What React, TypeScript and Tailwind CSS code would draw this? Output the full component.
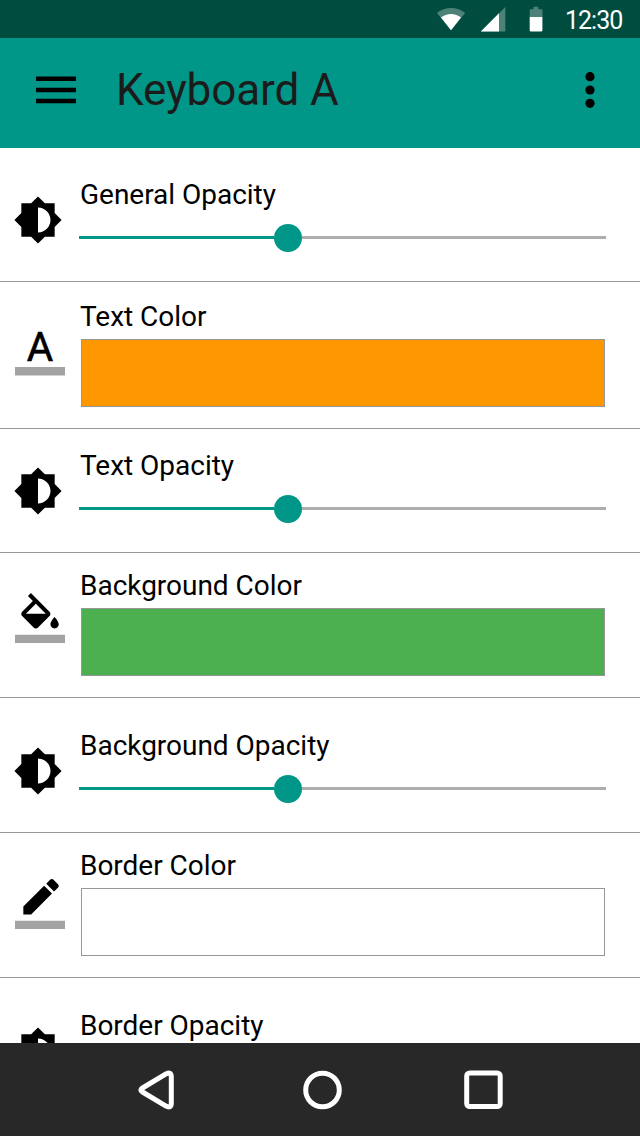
import React from "react";

type IconName = "opacity" | "text" | "fill" | "pencil";

function OpacityIcon() {
  return (
    <svg viewBox="0 0 24 24" className="block size-[50px]" fill="#000">
      <path d="M20 15.31L23.31 12 20 8.69V4h-4.69L12 .69 8.69 4H4v4.69L.69 12 4 15.31V20h4.69L12 23.31 15.31 20H20v-4.69zM12 18V6c3.31 0 6 2.69 6 6s-2.69 6-6 6z" />
    </svg>
  );
}

function FillIcon() {
  return (
    <svg viewBox="0 0 24 24" className="block size-[50px]" fill="#000">
      <path d="M16.56 8.94L7.62 0 6.21 1.41l2.38 2.38-5.15 5.15c-.59.59-.59 1.54 0 2.12l5.5 5.5c.29.29.68.44 1.06.44s.77-.15 1.06-.44l5.5-5.5c.59-.58.59-1.53 0-2.12zM5.21 10L10 5.21 14.79 10H5.21zM19 11.5s-2 2.17-2 3.5c0 1.1.9 2 2 2s2-.9 2-2c0-1.33-2-3.5-2-3.5z" />
      <path fillOpacity=".36" d="M0 20h24v4H0z" />
    </svg>
  );
}

function PencilIcon() {
  return (
    <svg viewBox="0 0 24 24" className="block size-[50px]" fill="#000">
      <path d="M17.75 7L14 3.25l-10 10V17h3.75l10-10zm2.96-2.96c.39-.39.39-1.02 0-1.41L18.37.29c-.39-.39-1.02-.39-1.41 0L15 2.25 18.75 6l1.96-1.96z" />
      <path fillOpacity=".36" d="M0 20h24v4H0z" />
    </svg>
  );
}

function TextIcon() {
  return (
    <svg viewBox="0 0 50 50" className="block size-[50px] overflow-visible" fill="#000">
      <text x="25" y="35.600" textAnchor="middle" stroke="#000" strokeWidth=".6" className="font-['Roboto',sans-serif] text-[40.5px]">
        A
      </text>
      <path fillOpacity=".36" d="M0 41.900h50V50.500H0z" />
    </svg>
  );
}

const icons: Record<IconName, React.ReactNode> = {
  opacity: <OpacityIcon />,
  text: <TextIcon />,
  fill: <FillIcon />,
  pencil: <PencilIcon />,
};

interface RowProps {
  icon: IconName;
  label: string;
  rowClass: string;
  iconClass: string;
  swatch?: string;
}

function Slider() {
  return (
    <div className="-ml-[2px] mt-[14px] flex h-7 w-[527px] items-start">
      <div className="mt-3 h-[3px] w-[195px] bg-[#009688]" />
      <div className="size-7 rounded-full bg-[#009688]" />
      <div className="mt-3 h-[3px] flex-1 bg-[#adadad]" />
    </div>
  );
}

function Row({ icon, label, rowClass, iconClass, swatch }: RowProps) {
  return (
    <div className={`flex shrink-0 border-b border-[#979797] ${rowClass}`}>
      <div className={`w-[81px] shrink-0 ${iconClass}`}>{icons[icon]}</div>
      <div>
        <div className="-ml-px h-8 whitespace-nowrap text-[28px] leading-[34px] tracking-[-0.02px]">{label}</div>
        {swatch ? (
          <div className={`mt-[7px] h-[68px] w-[524px] border border-[#979797] ${swatch}`} />
        ) : (
          <Slider />
        )}
      </div>
    </div>
  );
}

const rows: RowProps[] = [
  { icon: "opacity", label: "General Opacity", rowClass: "h-[134px] pt-[30px]", iconClass: "pl-[13px] pt-[17px]" },
  { icon: "text", label: "Text Color", rowClass: "h-[147px] pt-[18px]", iconClass: "pl-[15px] pt-[25px]", swatch: "bg-[#ff9800]" },
  { icon: "opacity", label: "Text Opacity", rowClass: "h-[124px] pt-[20px]", iconClass: "pl-[13px] pt-[17px]" },
  { icon: "fill", label: "Background Color", rowClass: "h-[145px] pt-[16px]", iconClass: "pl-[15px] pt-[24px]", swatch: "bg-[#4caf50]" },
  { icon: "opacity", label: "Background Opacity", rowClass: "h-[135px] pt-[31px]", iconClass: "pl-[13px] pt-[17px]" },
  { icon: "pencil", label: "Border Color", rowClass: "h-[145px] pt-[16px]", iconClass: "pl-[15px] pt-[30px]", swatch: "bg-white" },
  { icon: "opacity", label: "Border Opacity", rowClass: "h-[135px] pt-[31px]", iconClass: "pl-[13px] pt-[17px]" },
];

function StatusBar() {
  return (
    <div className="flex h-[38px] shrink-0 items-center bg-[#004d40] pl-[436px] text-white">
      <svg viewBox="0 0 30 38" className="h-[38px] w-[30px]" fill="#fff">
        <path fillOpacity=".3" d="M1 13C5 9.700 10 8 15 8s10 1.700 14.200 5L15 30.300z" />
        <path d="M5 17.500C8 15.200 11.300 14 15 14s7.200 1.200 10 3.500L15 30.300z" />
      </svg>
      <svg viewBox="0 0 26 38" className="ml-[14px] h-[38px] w-[26px]" fill="#fff">
        <path fillOpacity=".3" d="M25.300 7v24.600H.8z" />
        <path d="M19 13.300v18.300H.8z" />
      </svg>
      <svg viewBox="0 0 14 38" className="ml-[23px] h-[38px] w-[14px]" fill="#fff">
        <path fillOpacity=".3" d="M1.500 9.200h3V6.800h4.800v2.400h3q1.200 0 1.200 1.200V17H.7v-6.600q0-1.200.8-1.200z" />
        <path d="M.7 17h12.700v13.300q0 1.300-1.300 1.300H2q-1.300 0-1.300-1.300z" />
      </svg>
      <span className="ml-[22px] mt-[3px] text-[25px] leading-7 tracking-[-1px]">12:30</span>
    </div>
  );
}

export default function App() {
  return (
    <div className="flex h-[1136px] w-[640px] flex-col overflow-hidden bg-white font-['Roboto',sans-serif] text-black">
      <StatusBar />
      <header className="flex h-[110px] shrink-0 items-center bg-[#009688] pb-[6px]">
        <svg viewBox="0 0 40 28" className="ml-9 h-7 w-10">
          <path d="M0 .6h40v4.500H0zM0 11.700h40v4.500H0zM0 22.800h40v4.500H0z" />
        </svg>
        <h1 className="ml-10 flex-1 whitespace-nowrap text-[44px] leading-[52px] tracking-[-0.1px] text-[#1b1b1b]">Keyboard A</h1>
        <svg viewBox="0 0 10 38" className="mr-[45px] h-[38px] w-[10px]">
          <circle cx="5" cy="5.700" r="4.600" />
          <circle cx="5" cy="19" r="4.600" />
          <circle cx="5" cy="32.300" r="4.600" />
        </svg>
      </header>
      <main className="flex min-h-0 flex-1 flex-col overflow-hidden">
        {rows.map((row) => (
          <Row key={row.label} {...row} />
        ))}
      </main>
      <nav className="flex h-[93px] shrink-0 items-center bg-[#282828]">
        <svg viewBox="0 0 40 44" className="ml-[136px] h-11 w-10" fill="none" stroke="#fff" strokeWidth="5">
          <path strokeLinejoin="round" d="M30 5.900Q35 3.500 35.300 8.500V35.500Q35 40.500 30 38.100L6.500 24Q3.200 22 6.500 20z" />
        </svg>
        <svg viewBox="0 0 40 40" className="ml-[126px] size-10" fill="none" stroke="#fff" strokeWidth="5">
          <circle cx="20.500" cy="20" r="16.800" />
        </svg>
        <svg viewBox="0 0 40 40" className="ml-[121px] size-10" fill="none" stroke="#fff" strokeWidth="5">
          <rect x="3.700" y="3" width="33.500" height="33.500" rx="3" />
        </svg>
      </nav>
    </div>
  );
}
